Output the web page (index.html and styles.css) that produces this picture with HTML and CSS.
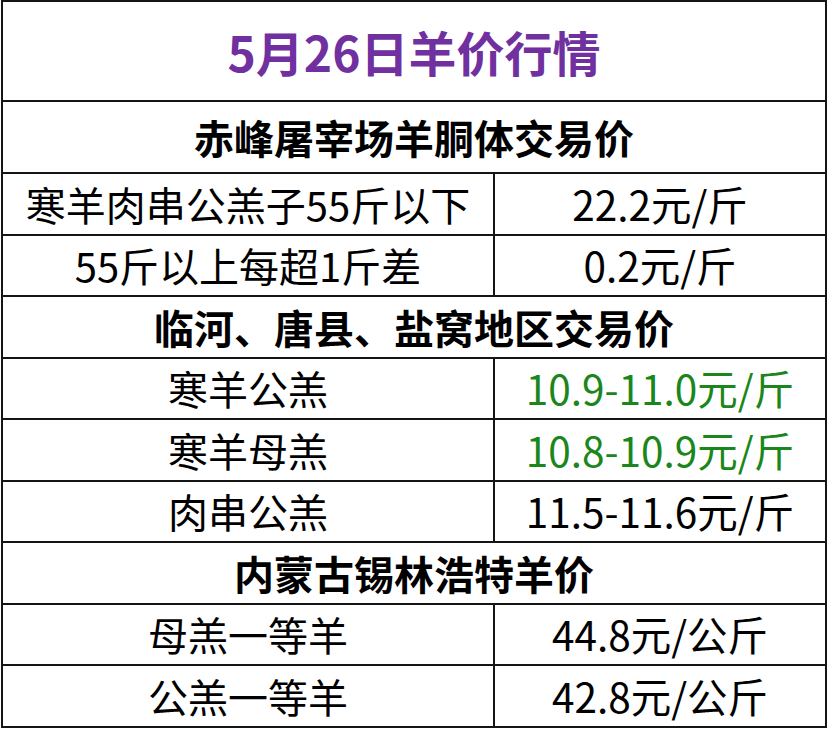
FILE: index.html
```html
<!DOCTYPE html>
<html lang="zh-CN">
<head>
<meta charset="utf-8">
<title>5月26日羊价行情</title>
<link rel="stylesheet" href="styles.css">
</head>
<body>
<div class="sheet">
  <div class="row title-row"><div class="cell full title">5月26日羊价行情</div></div>
  <div class="row head-row first-head"><div class="cell full head">赤峰屠宰场羊胴体交易价</div></div>
  <div class="row"><div class="cell name">寒羊肉串公羔子55斤以下</div><div class="cell price">22.2元/斤</div></div>
  <div class="row"><div class="cell name">55斤以上每超1斤差</div><div class="cell price">0.2元/斤</div></div>
  <div class="row"><div class="cell full head">临河、唐县、盐窝地区交易价</div></div>
  <div class="row"><div class="cell name">寒羊公羔</div><div class="cell price green">10.9-11.0元/斤</div></div>
  <div class="row"><div class="cell name">寒羊母羔</div><div class="cell price green">10.8-10.9元/斤</div></div>
  <div class="row"><div class="cell name">肉串公羔</div><div class="cell price">11.5-11.6元/斤</div></div>
  <div class="row"><div class="cell full head">内蒙古锡林浩特羊价</div></div>
  <div class="row"><div class="cell name">母羔一等羊</div><div class="cell price">44.8元/公斤</div></div>
  <div class="row"><div class="cell name">公羔一等羊</div><div class="cell price">42.8元/公斤</div></div>
</div>
</body>
</html>
```
FILE: styles.css
```css
html, body {
  margin: 0;
  padding: 0;
  background: #ffffff;
}
body {
  font-family: "Noto Sans CJK SC", "Noto Sans", sans-serif;
  color: #000000;
}
.sheet {
  margin: 0 0 0 1px;
  width: 822px;
  border-top: 2px solid #151515;
  border-left: 2px solid #151515;
  border-right: 2px solid #151515;
}
.row {
  display: flex;
  height: 59.5px;
  border-bottom: 2px solid #151515;
}
.title-row {
  height: 98px;
}
.first-head {
  height: 70px;
}
.cell {
  display: flex;
  align-items: center;
  justify-content: center;
  font-size: 40px;
  line-height: 1;
  white-space: nowrap;
}
.full {
  flex: 1;
}
.name {
  width: 490px;
  border-right: 2px solid #151515;
}
.price {
  flex: 1;
  font-size: 40.5px;
}
.title {
  font-size: 48px;
  font-weight: 700;
  color: #7030a0;
}
.head {
  font-weight: 700;
}
.green {
  color: #1b861b;
}
```
